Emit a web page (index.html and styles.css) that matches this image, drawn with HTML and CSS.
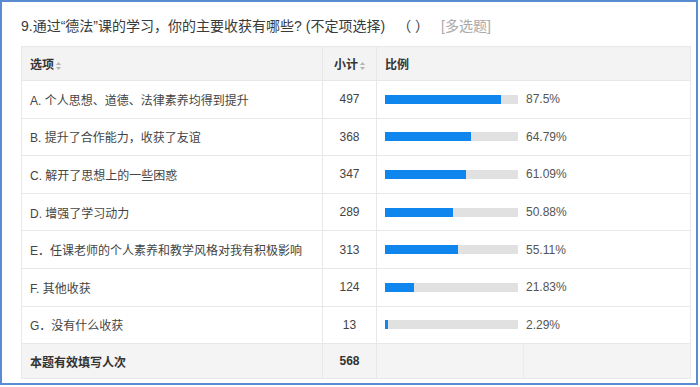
FILE: index.html
```html
<!DOCTYPE html>
<html lang="zh-CN">
<head>
<meta charset="utf-8">
<link rel="stylesheet" href="styles.css">
</head>
<body>
<div class="frame">
  <div class="title">9.通过“德法”课的学习，你的主要收获有哪些?<span class="paren">(不定项选择)</span><span class="blank">（ ）</span><span class="type">[多选题]</span></div>
  <table class="grid">
    <colgroup><col class="c1"><col class="c2"><col class="c3"></colgroup>
    <thead>
      <tr>
        <th class="opt">选项<svg class="sort" width="5" height="8" viewBox="0 0 5 8"><path d="M2.5 0 L5 3 L0 3 Z M2.5 8 L5 5 L0 5 Z" fill="#b5b5b5"/></svg></th>
        <th class="num">小计<svg class="sort" width="5" height="8" viewBox="0 0 5 8"><path d="M2.5 0 L5 3 L0 3 Z M2.5 8 L5 5 L0 5 Z" fill="#b5b5b5"/></svg></th>
        <th class="opt">比例</th>
      </tr>
    </thead>
    <tbody>
      <tr><td class="opt">A. 个人思想、道德、法律素养均得到提升</td><td class="num">497</td><td><div class="ratio"><div class="track"><div class="fill" style="width:87.5%"></div></div><span class="pct">87.5%</span></div></td></tr>
      <tr><td class="opt">B. 提升了合作能力，收获了友谊</td><td class="num">368</td><td><div class="ratio"><div class="track"><div class="fill" style="width:64.79%"></div></div><span class="pct">64.79%</span></div></td></tr>
      <tr><td class="opt">C. 解开了思想上的一些困惑</td><td class="num">347</td><td><div class="ratio"><div class="track"><div class="fill" style="width:61.09%"></div></div><span class="pct">61.09%</span></div></td></tr>
      <tr><td class="opt">D. 增强了学习动力</td><td class="num">289</td><td><div class="ratio"><div class="track"><div class="fill" style="width:50.88%"></div></div><span class="pct">50.88%</span></div></td></tr>
      <tr><td class="opt">E．任课老师的个人素养和教学风格对我有积极影响</td><td class="num">313</td><td><div class="ratio"><div class="track"><div class="fill" style="width:55.11%"></div></div><span class="pct">55.11%</span></div></td></tr>
      <tr><td class="opt">F. 其他收获</td><td class="num">124</td><td><div class="ratio"><div class="track"><div class="fill" style="width:21.83%"></div></div><span class="pct">21.83%</span></div></td></tr>
      <tr><td class="opt">G．没有什么收获</td><td class="num">13</td><td><div class="ratio"><div class="track"><div class="fill" style="width:2.29%"></div></div><span class="pct">2.29%</span></div></td></tr>
      <tr class="total"><td class="opt bold">本题有效填写人次</td><td class="num bold">568</td><td class="split"><div class="halves"><div class="h1"></div><div class="h2"></div></div></td></tr>
    </tbody>
  </table>
</div>
</body>
</html>
```

FILE: styles.css
```css
html, body {
  margin: 0;
  padding: 0;
  background: #ffffff;
}
body {
  font-family: "Liberation Sans", "Noto Sans CJK SC", Arial, sans-serif;
  color: #333333;
}
.frame {
  width: 698px;
  height: 385px;
  box-sizing: border-box;
  border: 2px solid #5b8bd0;
  padding: 16px 0 0 19px;
}
.title {
  font-size: 14px;
  line-height: 16px;
  color: #3a3a3a;
  height: 16px;
  white-space: nowrap;
}
.title .paren { margin-left: 4px; }
.title .blank { margin-left: 12px; }
.title .type { margin-left: 12px; color: #a9a9a9; }
.grid {
  margin-top: 12px;
  border-collapse: collapse;
  table-layout: fixed;
  width: 669px;
  font-size: 12px;
}
.c1 { width: 301px; }
.c2 { width: 54px; }
.c3 { width: 314px; }
.grid th, .grid td {
  border: 1px solid #e8e8e8;
  padding: 0 0 0 8px;
  text-align: left;
  vertical-align: middle;
  white-space: nowrap;
}
.grid thead tr { height: 34px; background: #f3f3f3; }
.grid th { font-weight: bold; color: #333; }
.grid tbody tr { height: 37.6px; background: #fff; }
.grid td { color: #444; }
.grid .num { text-align: center; padding: 0; }
.sort { margin-left: 2px; vertical-align: -1px; }
.ratio {
  display: flex;
  align-items: center;
  gap: 8px;
}
.track {
  width: 133px;
  height: 9px;
  background: #e1e1e1;
}
.fill {
  height: 100%;
  background: #0f86ee;
}
.pct { color: #555; }
.grid tbody tr.total { height: 34px; background: #f4f4f4; }
.bold { font-weight: bold; color: #333 !important; }
.grid td.split { padding: 0; height: 34px; }
.halves { display: flex; height: 34px; }
.h1 { width: 146px; border-right: 1px solid #ececec; }
.h2 { flex: 1; }
```
